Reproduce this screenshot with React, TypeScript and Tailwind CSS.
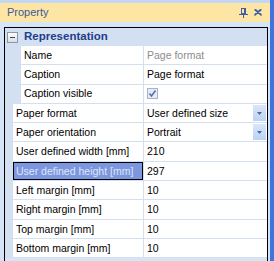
import React from "react";

type Row = {
  label: string;
  value: string;
  nested?: boolean;
  kind?: "text" | "gray" | "check" | "combo";
  selected?: boolean;
};

const rows: Row[] = [
  { label: "Name", value: "Page format", nested: true, kind: "gray" },
  { label: "Caption", value: "Page format", nested: true },
  { label: "Caption visible", value: "", nested: true, kind: "check" },
  { label: "Paper format", value: "User defined size", kind: "combo" },
  { label: "Paper orientation", value: "Portrait", kind: "combo" },
  { label: "User defined width [mm]", value: "210" },
  { label: "User defined height [mm]", value: "297", selected: true },
  { label: "Left margin [mm]", value: "10" },
  { label: "Right margin [mm]", value: "10" },
  { label: "Top margin [mm]", value: "10" },
  { label: "Bottom margin [mm]", value: "10" },
];

function PinIcon() {
  return (
    <svg width="9" height="10" viewBox="0 0 9 10" className="block">
      <rect x="2.5" y="0.5" width="4" height="5" fill="none" stroke="#3d5fa6" />
      <rect x="5" y="1" width="1" height="4" fill="#3d5fa6" />
      <rect x="0" y="6" width="9" height="1" fill="#3d5fa6" />
      <rect x="4" y="7" width="1" height="3" fill="#3d5fa6" />
    </svg>
  );
}

function CloseIcon() {
  return (
    <svg width="8" height="7" viewBox="0 0 8 7" className="block">
      <path d="M0.5 0.5 L7.5 6.5 M7.5 0.5 L0.5 6.5 M1.5 0.5 L7.5 5.8 M6.5 0.5 L0.5 5.8" stroke="#3d5fa6" strokeWidth="1.2" fill="none" />
    </svg>
  );
}

function ComboButton() {
  return (
    <div className="ml-auto mr-[1px] flex h-[16px] w-[13px] items-center justify-center bg-gradient-to-b from-[#d9e6f8] to-[#bcd2f3]">
      <svg width="5" height="3" viewBox="0 0 5 3" className="block">
        <path d="M0 0 H5 L2.5 3 Z" fill="#4b6a9c" />
      </svg>
    </div>
  );
}

function CheckBox() {
  return (
    <div className="flex h-[11px] w-[11px] items-center justify-center border border-[#a5b4c9] bg-[#e6ebf2]">
      <svg width="9" height="9" viewBox="0 0 9 9" className="block">
        <path d="M1.5 4.5 L3.5 7 L7.5 1.5" stroke="#4e72b8" strokeWidth="1.6" fill="none" />
      </svg>
    </div>
  );
}

function GridRow({ row }: { row: Row }) {
  return (
    <div className="flex h-[19.3px] border-b border-[#d3e0f2]">
      <div className={row.nested ? "w-[16px] shrink-0 bg-[#d3e0f2]" : "w-[8px] shrink-0 bg-[#d3e0f2]"} />
      <div
        className={
          row.selected
            ? "flex flex-1 items-center border border-black bg-[#7c97df] pl-[2px] text-[#dfe6f6]"
            : "flex flex-1 items-center bg-white pl-[3px] text-black"
        }
      >
        <span className="whitespace-nowrap">{row.label}</span>
      </div>
      <div className="w-[1px] shrink-0 bg-[#d3e0f2]" />
      <div className="flex w-[123px] shrink-0 items-center bg-white pl-[3px]">
        {row.kind === "check" ? (
          <CheckBox />
        ) : (
          <span className={row.kind === "gray" ? "whitespace-nowrap text-[#8c8c8c]" : "whitespace-nowrap text-black"}>
            {row.value}
          </span>
        )}
        {row.kind === "combo" && <ComboButton />}
      </div>
    </div>
  );
}

export default function App() {
  return (
    <div className="flex h-[261px] w-[274px] overflow-hidden bg-[#d6e4f7] font-['Liberation_Sans',Arial,sans-serif] text-[10.5px] leading-none">
      <div className="flex w-[270px] flex-col">
        <div className="h-[3px] shrink-0 bg-[#c3d7f4]" />
        {/* Title bar */}
        <div className="flex h-[19px] shrink-0 items-center bg-[#fde5a3] pl-[7px] pr-[8px]">
          <span className="text-[11px] text-[#3c5b9f]">Property</span>
          <div className="ml-auto flex items-center gap-[6px]">
            <PinIcon />
            <CloseIcon />
          </div>
        </div>
        <div className="h-[5px] shrink-0" />
        {/* Grid */}
        <div className="ml-[4px] mr-[2px] flex flex-1 flex-col border-l border-r border-t border-black">
          <div className="flex h-[18px] shrink-0 items-center bg-[#d3e0f2] pl-[2px]">
            <div className="flex h-[11px] w-[11px] items-center justify-center border border-[#8c97a8] bg-gradient-to-b from-white to-[#d9dde3]">
              <div className="h-[1px] w-[5px] bg-[#3a4a5e]" />
            </div>
            <span className="ml-[6px] text-[11.5px] font-bold text-[#1f3d8a]">Representation</span>
          </div>
          {rows.map((r) => (
            <GridRow key={r.label} row={r} />
          ))}
        </div>
      </div>
      <div className="w-[4px] bg-[#3f74dc]" />
    </div>
  );
}
